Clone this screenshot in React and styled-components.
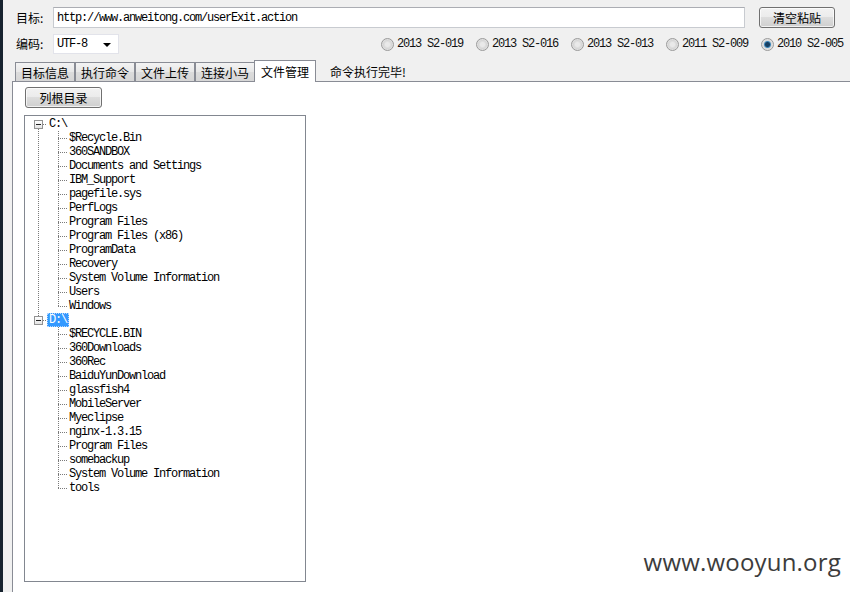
import styled, { createGlobalStyle } from "styled-components";

const GlobalStyle = createGlobalStyle`
  html, body { margin: 0; padding: 0; background: #f0f0f0; overflow: hidden; }
  * { box-sizing: border-box; }
`;

const MONO = `"Liberation Mono", "DejaVu Sans Mono", monospace`;
const CJK = `"Noto Sans CJK SC", "Noto Sans", sans-serif`;

const drives = [
  {
    name: "C:\\",
    children: [
      "$Recycle.Bin",
      "360SANDBOX",
      "Documents and Settings",
      "IBM_Support",
      "pagefile.sys",
      "PerfLogs",
      "Program Files",
      "Program Files (x86)",
      "ProgramData",
      "Recovery",
      "System Volume Information",
      "Users",
      "Windows",
    ],
  },
  {
    name: "D:\\",
    selected: true,
    children: [
      "$RECYCLE.BIN",
      "360Downloads",
      "360Rec",
      "BaiduYunDownload",
      "glassfish4",
      "MobileServer",
      "Myeclipse",
      "nginx-1.3.15",
      "Program Files",
      "somebackup",
      "System Volume Information",
      "tools",
    ],
  },
];

const exploits = [
  { label: "2013 S2-019" },
  { label: "2013 S2-016" },
  { label: "2013 S2-013" },
  { label: "2011 S2-009" },
  { label: "2010 S2-005", checked: true },
];

const tabs = ["目标信息", "执行命令", "文件上传", "连接小马", "文件管理"];

export default function App() {
  return (
    <>
      <GlobalStyle />
      <Window>
        <FormRow>
          <Label>目标:</Label>
          <UrlInput>http://www.anweitong.com/userExit.action</UrlInput>
          <Button $w={76}>清空粘贴</Button>
        </FormRow>
        <FormRow $top={6} $h={20}>
          <Label>编码:</Label>
          <Select>
            UTF-8
            <Caret />
          </Select>
          <RadioGroup>
            {exploits.map((e) => (
              <RadioItem key={e.label}>
                <RadioDot $on={e.checked} />
                {e.label}
              </RadioItem>
            ))}
          </RadioGroup>
        </FormRow>
        <TabStrip>
          {tabs.map((t, i) => (
            <Tab key={t} $active={i === tabs.length - 1}>
              {t}
            </Tab>
          ))}
          <Status>命令执行完毕!</Status>
        </TabStrip>
        <Panel>
          <Button $w={77} $ml={1}>列根目录</Button>
          <TreeBox>
            {drives.map((d, di) => {
              const last = di === drives.length - 1;
              return (
                <div key={d.name}>
                  <TreeRow>
                    <DriveCell $up={di > 0} $down={!last}>
                      <Expander />
                    </DriveCell>
                    <Node $selected={d.selected}>{d.name}</Node>
                  </TreeRow>
                  {d.children.map((c, ci) => (
                    <TreeRow key={c}>
                      <Guide $v={!last} />
                      <Guide $v $half={ci === d.children.length - 1} $h />
                      <Node>{c}</Node>
                    </TreeRow>
                  ))}
                </div>
              );
            })}
          </TreeBox>
        </Panel>
        <Watermark>www.wooyun.org</Watermark>
      </Window>
    </>
  );
}

const Window = styled.div`
  position: relative;
  width: 850px;
  height: 592px;
  border-left: 3px solid #17222e;
  background: #f0f0f0;
  display: flex;
  flex-direction: column;
  font-family: ${CJK};
  font-size: 12px;
  color: #000;
  overflow: hidden;
`;

const FormRow = styled.div`
  display: flex;
  align-items: center;
  height: ${(p) => p.$h || 21}px;
  margin-top: ${(p) => p.$top || 7}px;
  padding: 0 15px 0 13px;
`;

const Label = styled.div`
  width: 37px;
  flex-shrink: 0;
  line-height: 1;
`;

const UrlInput = styled.div`
  flex: 1;
  height: 21px;
  margin-right: 14px;
  padding: 0 3px;
  display: flex;
  align-items: center;
  background: #fff;
  border: 1px solid #c8cbd0;
  border-top-color: #abadb3;
  font-family: ${MONO};
  font-size: 12px;
  letter-spacing: -1.2px;
`;

const Button = styled.div`
  width: ${(p) => p.$w}px;
  height: 21px;
  margin-left: ${(p) => p.$ml || 0}px;
  flex-shrink: 0;
  display: flex;
  align-items: center;
  justify-content: center;
  border: 1px solid #707070;
  border-radius: 3px;
  background: linear-gradient(#f2f2f2 0%, #ebebeb 50%, #dddddd 50%, #cfcfcf 100%);
  box-shadow: inset 0 0 0 1px rgba(255, 255, 255, 0.7);
  font-size: 12px;
`;

const Select = styled.div`
  position: relative;
  width: 66px;
  height: 20px;
  padding-left: 3px;
  display: flex;
  align-items: center;
  background: #fff;
  border: 1px solid #e2e3ea;
  font-family: ${MONO};
  font-size: 12px;
  letter-spacing: -1.2px;
`;

const Caret = styled.span`
  position: absolute;
  right: 7px;
  top: 8px;
  border-left: 4px solid transparent;
  border-right: 4px solid transparent;
  border-top: 4px solid #000;
`;

const RadioGroup = styled.div`
  margin-left: auto;
  margin-right: -8px;
  display: flex;
  gap: 13px;
`;

const RadioItem = styled.div`
  display: flex;
  align-items: center;
  gap: 3px;
  font-family: ${MONO};
  font-size: 12px;
  letter-spacing: -1.2px;
  color: #111;
`;

const RadioDot = styled.span`
  width: 13px;
  height: 13px;
  border-radius: 50%;
  border: 1px solid #9a9a9a;
  background: ${(p) =>
    p.$on
      ? "radial-gradient(circle, #173f62 0 2px, #3d86ba 3px, #d9d9d9 4px, #f4f4f4 100%)"
      : "radial-gradient(circle, #e9e9e9 0 2px, #d6d6d6 4px, #f6f6f6 100%)"};
`;

const TabStrip = styled.div`
  display: flex;
  align-items: flex-end;
  height: 21px;
  margin-top: 6px;
  padding-left: 12px;
  position: relative;
  z-index: 1;
`;

const Tab = styled.div`
  height: ${(p) => (p.$active ? 22 : 19)}px;
  margin: ${(p) => (p.$active ? "0 0 -1px -1px" : "0")};
  padding: 0 ${(p) => (p.$active ? 6 : 5)}px;
  display: flex;
  align-items: center;
  border: 1px solid #898c95;
  border-bottom: none;
  background: ${(p) =>
    p.$active ? "#fff" : "linear-gradient(#f3f3f3, #e7e7e7 50%, #dcdcdc 51%, #d6d6d6)"};
  font-size: 12px;
`;

const Status = styled.div`
  align-self: center;
  margin-left: 14px;
  margin-top: 2px;
  font-size: 12px;
`;

const Panel = styled.div`
  flex: 1;
  margin-left: 9px;
  padding: 5px 0 0 11px;
  border-top: 1px solid #898c95;
  border-left: 1px solid #898c95;
  background: #fff;
`;

const TreeBox = styled.div`
  width: 282px;
  height: 467px;
  margin-top: 7px;
  padding: 1px 0 0 3px;
  border: 1px solid #828790;
  background: #fff;
`;

const TreeRow = styled.div`
  display: flex;
  align-items: center;
  height: 14px;
`;

const dotsV = "repeating-linear-gradient(to bottom, #7a7a7a 0 1px, transparent 1px 2px)";
const dotsH = "repeating-linear-gradient(to right, #7a7a7a 0 1px, transparent 1px 2px)";

const Guide = styled.div`
  position: relative;
  width: 20px;
  height: 14px;
  flex-shrink: 0;

  &::before {
    content: "";
    display: ${(p) => (p.$v ? "block" : "none")};
    position: absolute;
    left: 10px;
    top: 0;
    width: 1px;
    height: ${(p) => (p.$half ? 8 : 14)}px;
    background: ${dotsV};
  }
  &::after {
    content: "";
    display: ${(p) => (p.$h ? "block" : "none")};
    position: absolute;
    left: 10px;
    top: 7px;
    width: 9px;
    height: 1px;
    background: ${dotsH};
  }
`;

const DriveCell = styled.div`
  position: relative;
  width: 20px;
  height: 14px;
  flex-shrink: 0;
  display: flex;
  align-items: center;
  padding-left: 6px;

  &::before {
    content: "";
    position: absolute;
    left: 10px;
    top: ${(p) => (p.$up ? 0 : 12)}px;
    width: 1px;
    height: ${(p) => (p.$up && p.$down ? 14 : p.$up ? 3 : 2)}px;
    display: ${(p) => (p.$up || p.$down ? "block" : "none")};
    background: ${dotsV};
  }
  &::after {
    content: "";
    position: absolute;
    left: 15px;
    top: 7px;
    width: 4px;
    height: 1px;
    background: ${dotsH};
  }
`;

const Expander = styled.span`
  position: relative;
  width: 9px;
  height: 9px;
  margin-top: 1px;
  border: 1px solid #929292;
  background: linear-gradient(#fff, #e4e4e4);
  z-index: 1;

  &::after {
    content: "";
    position: absolute;
    left: 1px;
    top: 3px;
    width: 5px;
    height: 1px;
    background: #222;
  }
`;

const Node = styled.span`
  height: 14px;
  margin-left: -1px;
  padding: 0 2px;
  display: flex;
  align-items: center;
  white-space: pre;
  font-family: ${MONO};
  font-size: 12px;
  letter-spacing: -1.2px;
  color: ${(p) => (p.$selected ? "#fff" : "#000")};
  background: ${(p) => (p.$selected ? "#3399ff" : "transparent")};
  outline: ${(p) => (p.$selected ? "1px dotted #b6d8ff" : "none")};
  outline-offset: -1px;
`;

const Watermark = styled.div`
  position: absolute;
  right: 9px;
  bottom: 14px;
  font-family: "Open Sans", sans-serif;
  font-size: 24px;
  color: #3c3c3c;
  letter-spacing: 0.2px;
`;
